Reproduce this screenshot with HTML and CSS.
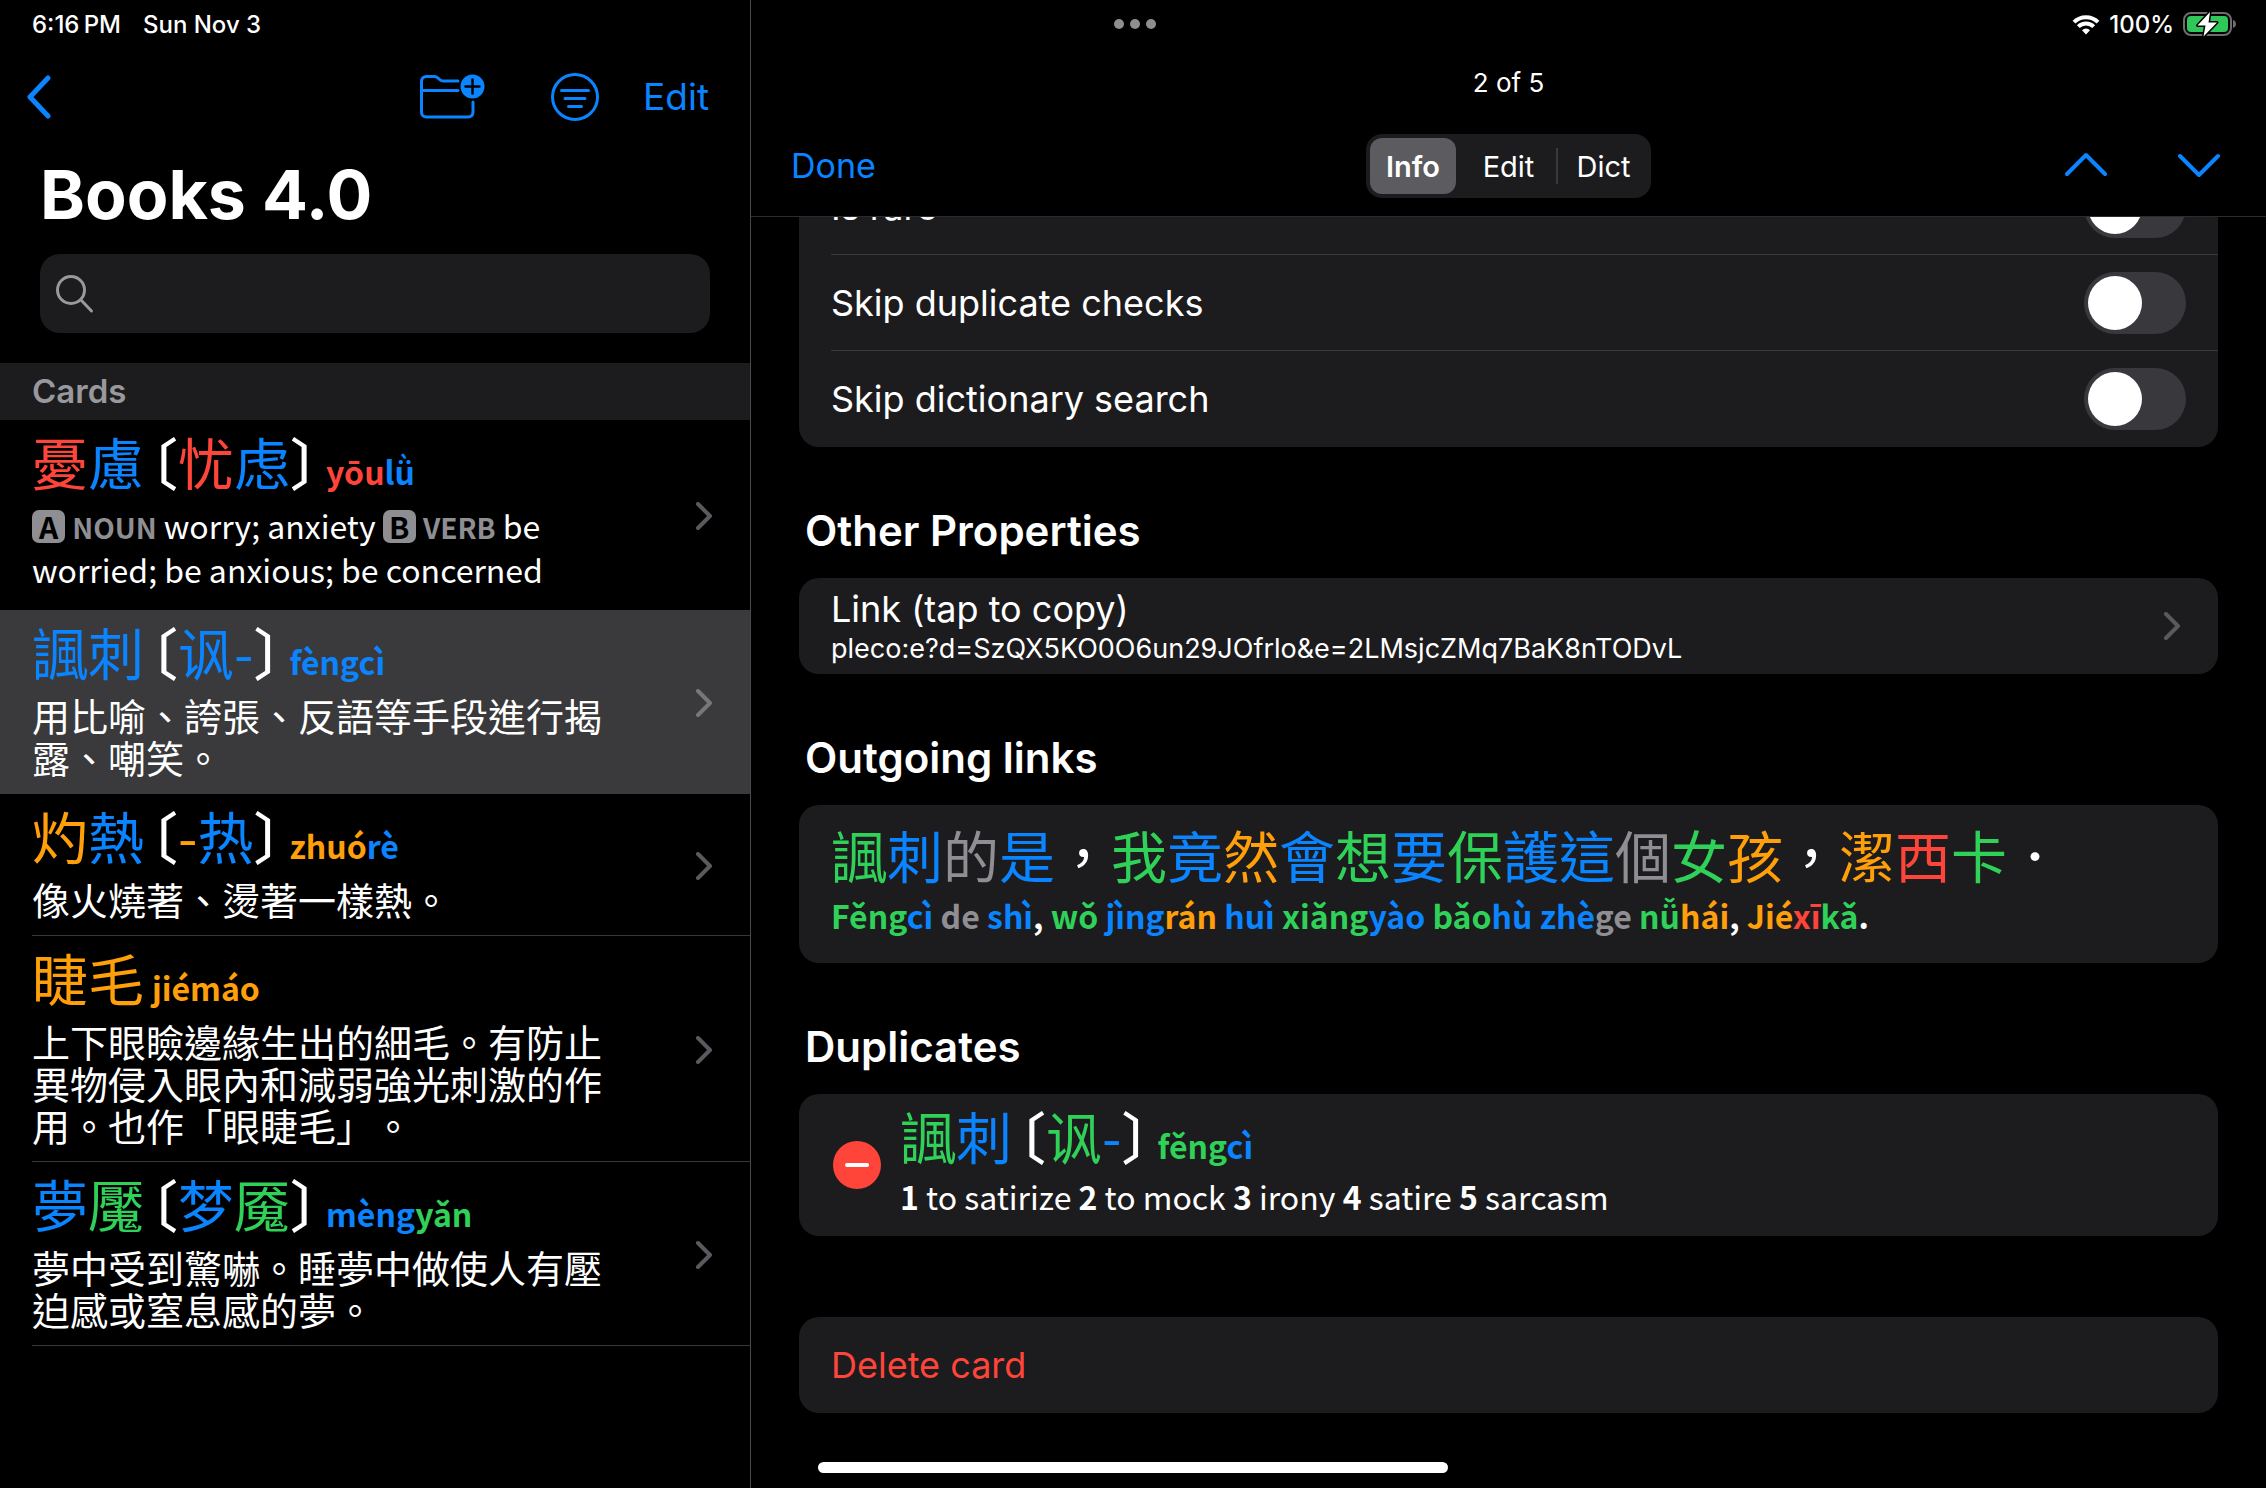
FILE: index.html
```
<!DOCTYPE html>
<html lang="zh-Hant">
<head>
    <meta charset="UTF-8">
    <meta name="viewport" content="width=device-width, initial-scale=1.0">
    <title>Books 4.0</title>
    <link rel="stylesheet" href="styles.css">
</head>
<body>
    <div class="status-bar">
        <div class="status-left"><span>6:16&#8239;PM</span><span>Sun Nov 3</span></div>
        <div class="dots"><i></i><i></i><i></i></div>
        <div class="status-right">
            <svg class="wifi" viewBox="0 0 28 21">
                <path d="M2 8.2a17 17 0 0 1 24 0" />
                <path d="M6.3 12.6a11 11 0 0 1 15.4 0" />
                <path class="wifi-dot" d="M14 20.5l-4-4.2a5.6 5.6 0 0 1 8 0z" />
            </svg>
            <span>100%</span>
            <svg class="battery" viewBox="0 0 54 26">
                <rect x="1" y="2" width="47" height="22" rx="7" fill="none" stroke="#6d6d70" stroke-width="2" />
                <path d="M50 9v8c2-.6 3-2.200 3-4s-1-3.400-3-4z" fill="#6d6d70" />
                <rect x="4" y="5" width="41" height="16" rx="4" fill="#30c759" />
                <path d="M27 1L14.500 14.500h8L20.500 25.500 34 11.500h-8.500z" fill="#fff" stroke="#000" stroke-width="3" paint-order="stroke" stroke-linejoin="round" />
            </svg>
        </div>
    </div>

    <div class="split">
        <aside class="sidebar">
            <nav class="sidebar-nav">
                <button class="icon-btn" aria-label="Back">
                    <svg width="26" height="44" viewBox="0 0 26 44"><path d="M22 3L4 22l18 19" stroke-width="5" /></svg>
                </button>
                <button class="icon-btn push" aria-label="New folder">
                    <svg width="66" height="46" viewBox="0 0 66 46">
                        <path d="M38 7H23c-2 0-3-1-4-2l-1-1c-1-1-2-1.500-4-1.500H6.500c-3 0-5 2-5 5V38c0 3 2 5 5 5H48c3 0 5-2 5-5V28" stroke-width="3" />
                        <path d="M1.500 16.500H38" stroke-width="3" />
                        <circle cx="52.500" cy="12.500" r="12" fill="#0a84ff" stroke="none" />
                        <path d="M52.500 5.500v14M45.500 12.500h14" stroke="#000" stroke-width="2.500" />
                    </svg>
                </button>
                <button class="icon-btn filter" aria-label="Sort and filter">
                    <svg width="50" height="50" viewBox="0 0 50 50">
                        <circle cx="25" cy="25" r="22.500" stroke-width="3" />
                        <path d="M11.500 18.500h27M15 26.500h20M18.500 34.500h13" stroke-width="3" />
                    </svg>
                </button>
                <button class="text-btn large">Edit</button>
            </nav>

            <h1>Books 4.0</h1>

            <label class="search">
                <svg width="40" height="40" viewBox="0 0 40 40"><circle cx="16" cy="16" r="13.500" /><path d="M26 26l10.500 11" /></svg>
                <input type="search" aria-label="Search">
            </label>

            <h2 class="list-header">Cards</h2>

            <ul class="cards">
                <li class="card-row">
                    <div class="card-body">
                        <div class="head"><span class="t1">憂</span><span class="t4">慮</span><b class="open">〔</b><span class="t1">忧</span><span class="t4">虑</span><b>〕</b><span class="pinyin"><span class="t1">yōu</span><span class="t4">lǜ</span></span></div>
                        <div class="def latin"><span class="badge">A</span> <span class="pos">NOUN</span> worry; anxiety <span class="badge">B</span> <span class="pos">VERB</span> be worried; be anxious; be concerned</div>
                    </div>
                    <svg class="chevron" viewBox="0 0 18 28"><path d="M3 2l12 12L3 26" /></svg>
                </li>
                <li class="card-row selected">
                    <div class="card-body">
                        <div class="head"><span class="t4">諷刺</span><b class="open">〔</b><span class="t4">讽-</span><b>〕</b><span class="pinyin t4">fèngcì</span></div>
                        <div class="def">用比喻、誇張、反語等手段進行揭露、嘲笑。</div>
                    </div>
                    <svg class="chevron" viewBox="0 0 18 28"><path d="M3 2l12 12L3 26" /></svg>
                </li>
                <li class="card-row">
                    <div class="card-body">
                        <div class="head"><span class="t2">灼</span><span class="t4">熱</span><b class="open">〔</b><span class="t2">-</span><span class="t4">热</span><b>〕</b><span class="pinyin"><span class="t2">zhuó</span><span class="t4">rè</span></span></div>
                        <div class="def">像火燒著、燙著一樣熱。</div>
                    </div>
                    <svg class="chevron" viewBox="0 0 18 28"><path d="M3 2l12 12L3 26" /></svg>
                </li>
                <li class="card-row">
                    <div class="card-body">
                        <div class="head"><span class="t2">睫毛</span><span class="pinyin t2">jiémáo</span></div>
                        <div class="def">上下眼瞼邊緣生出的細毛。有防止異物侵入眼內和減弱強光刺激的作用。也作「眼睫毛」。</div>
                    </div>
                    <svg class="chevron" viewBox="0 0 18 28"><path d="M3 2l12 12L3 26" /></svg>
                </li>
                <li class="card-row">
                    <div class="card-body">
                        <div class="head"><span class="t4">夢</span><span class="t3">魘</span><b class="open">〔</b><span class="t4">梦</span><span class="t3">魇</span><b>〕</b><span class="pinyin"><span class="t4">mèng</span><span class="t3">yǎn</span></span></div>
                        <div class="def">夢中受到驚嚇。睡夢中做使人有壓迫感或窒息感的夢。</div>
                    </div>
                    <svg class="chevron" viewBox="0 0 18 28"><path d="M3 2l12 12L3 26" /></svg>
                </li>
            </ul>
        </aside>

        <main class="detail">
            <header class="detail-nav">
                <div class="counter">2 of 5</div>
                <div class="toolbar">
                    <button class="text-btn">Done</button>
                    <div class="segmented">
                        <button class="active">Info</button>
                        <button>Edit</button>
                        <button>Dict</button>
                    </div>
                    <div class="arrows">
                        <button class="icon-btn" aria-label="Previous card"><svg width="42" height="26" viewBox="0 0 42 26"><path d="M2 22L21 3l19 19" stroke-width="4" /></svg></button>
                        <button class="icon-btn" aria-label="Next card"><svg width="42" height="26" viewBox="0 0 42 26"><path d="M2 4l19 19L40 4" stroke-width="4" /></svg></button>
                    </div>
                </div>
            </header>

            <div class="scroll">
                <div class="settings">
                    <section class="group">
                        <label class="row"><span>Is rare</span><input type="checkbox" class="switch"></label>
                        <label class="row"><span>Skip duplicate checks</span><input type="checkbox" class="switch"></label>
                        <label class="row"><span>Skip dictionary search</span><input type="checkbox" class="switch"></label>
                    </section>

                    <h2>Other Properties</h2>
                    <button class="group link-row">
                        <span class="link-text">
                            <span>Link (tap to copy)</span>
                            <small>pleco:e?d=SzQX5KO0O6un29JOfrlo&amp;e=2LMsjcZMq7BaK8nTODvL</small>
                        </span>
                        <svg class="chevron" viewBox="0 0 18 28"><path d="M3 2l12 12L3 26" /></svg>
                    </button>

                    <h2>Outgoing links</h2>
                    <section class="group sentence">
                        <div class="head"><span class="t3">諷</span><span class="t4">刺</span><span class="t5">的</span><span class="t4">是</span>，<span class="t3">我</span><span class="t4">竟</span><span class="t2">然</span><span class="t4">會</span><span class="t3">想</span><span class="t4">要</span><span class="t3">保</span><span class="t4">護這</span><span class="t5">個</span><span class="t3">女</span><span class="t2">孩</span>，<span class="t2">潔</span><span class="t1">西</span><span class="t3">卡</span>．</div>
                        <div class="reading"><span class="t3">Fěng</span><span class="t4">cì</span> <span class="t5">de</span> <span class="t4">shì</span>, <span class="t3">wǒ</span> <span class="t4">jìng</span><span class="t2">rán</span> <span class="t4">huì</span> <span class="t3">xiǎng</span><span class="t4">yào</span> <span class="t3">bǎo</span><span class="t4">hù</span> <span class="t4">zhè</span><span class="t5">ge</span> <span class="t3">nǚ</span><span class="t2">hái</span>, <span class="t2">Jié</span><span class="t1">xī</span><span class="t3">kǎ</span>.</div>
                    </section>

                    <h2>Duplicates</h2>
                    <section class="group duplicate">
                        <button class="remove" aria-label="Remove duplicate"><svg width="48" height="48" viewBox="0 0 48 48"><circle cx="24" cy="24" r="24" fill="#ff453a" /><path d="M14 24h20" stroke="#fff" stroke-width="4" stroke-linecap="round" /></svg></button>
                        <div class="card-body">
                            <div class="head"><span class="t3">諷</span><span class="t4">刺</span><b class="open">〔</b><span class="t3">讽</span><span class="t4">-</span><b>〕</b><span class="pinyin"><span class="t3">fěng</span><span class="t4">cì</span></span></div>
                            <div class="def latin"><strong>1</strong> to satirize <strong>2</strong> to mock <strong>3</strong> irony <strong>4</strong> satire <strong>5</strong> sarcasm</div>
                        </div>
                    </section>

                    <button class="group delete">Delete card</button>
                </div>
            </div>
        </main>
    </div>
    <div class="home-indicator"></div>
</body>
</html>
```
FILE: styles.css
```
* {
    box-sizing: border-box;
}

body {
    margin: 0;
    height: 100vh;
    overflow: hidden;
    background: #000;
    color: #fff;
    font-family: Inter, "Noto Sans CJK TC", sans-serif;
    font-size: 36px;
}

h1, h2, ul {
    margin: 0;
    padding: 0;
    list-style: none;
}

button {
    font: inherit;
    color: inherit;
    background: none;
    border: none;
    padding: 0;
    cursor: pointer;
}

svg {
    display: block;
}

/* tone colours */
.t1 { color: #ff453a; }
.t2 { color: #ff9f0a; }
.t3 { color: #30d158; }
.t4 { color: #0a84ff; }
.t5 { color: #8e8e93; }

/* status bar lies over both columns */
.status-bar {
    position: absolute;
    top: 0;
    left: 0;
    right: 0;
    height: 48px;
    padding: 0 29px 0 32px;
    display: grid;
    grid-template-columns: 1fr auto 1fr;
    align-items: center;
    font-size: 24px;
    font-weight: 500;
}

.status-left,
.status-right,
.dots {
    display: flex;
    align-items: center;
}

.status-left {
    gap: 22px;
}

.status-right {
    justify-content: flex-end;
    gap: 9px;
}

.dots {
    gap: 6px;
}

.dots i {
    width: 10px;
    height: 10px;
    border-radius: 50%;
    background: #8e8e8e;
}

.wifi {
    width: 28px;
    height: 21px;
    fill: none;
    stroke: #fff;
    stroke-width: 4;
}

.wifi-dot {
    fill: #fff;
    stroke: none;
}

.battery {
    width: 54px;
    height: 26px;
}

.split {
    display: grid;
    grid-template-columns: minmax(0, 751px) minmax(0, 1fr);
    height: 100%;
}

/* sidebar */
.sidebar {
    padding-top: 48px;
    border-right: 1px solid #48484a;
}

.sidebar-nav {
    display: flex;
    align-items: center;
    height: 98px;
    padding: 0 41px 0 26px;
}

.icon-btn svg {
    fill: none;
    stroke: #0a84ff;
    stroke-linecap: round;
    stroke-linejoin: round;
}

.push {
    margin-left: auto;
}

.filter {
    margin: 0 43px 0 64px;
}

.text-btn {
    padding-bottom: 2px;
    color: #0a84ff;
    font-size: 34px;
}

.text-btn.large {
    font-size: 37px;
}

h1 {
    padding: 0 40px;
    font-size: 68px;
    line-height: 96px;
    font-weight: 700;
}

.search {
    display: flex;
    align-items: center;
    height: 79px;
    margin: 12px 40px 30px;
    padding: 0 15px;
    gap: 12px;
    background: #1c1c1e;
    border-radius: 20px;
}

.search svg {
    fill: none;
    stroke: #98989d;
    stroke-width: 3;
    stroke-linecap: round;
}

.search input {
    flex: 1;
    min-width: 0;
    height: 100%;
    background: none;
    border: none;
    outline: none;
    color: #fff;
    font: inherit;
}

.list-header {
    height: 57px;
    padding: 0 32px;
    background: #1c1c1e;
    color: #98989d;
    font-size: 33px;
    line-height: 56px;
    font-weight: 600;
}

.card-row {
    position: relative;
    display: flex;
    align-items: center;
    justify-content: space-between;
    padding: 11px 37px 16px 32px;
}

.card-row::after {
    content: "";
    position: absolute;
    left: 32px;
    right: 0;
    bottom: 0;
    height: 1px;
    background: #38383a;
}

.card-row:first-child::after,
.card-row.selected::after {
    display: none;
}

.card-row.selected {
    background: #3a3a3c;
}

.card-body {
    max-width: 576px;
}

.head,
.def,
.reading {
    font-family: "Noto Sans CJK TC", sans-serif;
    text-spacing-trim: space-all;
}

.head {
    font-size: 56px;
    line-height: 60px;
    white-space: nowrap;
}

/* half-width brackets around the simplified form */
.head b {
    font-weight: 500;
    font-feature-settings: "halt";
}

.head .open {
    margin-left: 6px;
}

.pinyin {
    margin-left: 8px;
    font-size: 32px;
    line-height: 1;
    font-weight: 700;
}

.def {
    margin-top: 13px;
    font-size: 38px;
    line-height: 42px;
}

.def.latin {
    margin-top: 12px;
    padding-bottom: 3px;
    font-size: 32px;
    line-height: 44px;
}

.badge {
    display: inline-block;
    width: 33px;
    height: 33px;
    border-radius: 7px;
    background: #8e8e93;
    color: #000;
    font-size: 30px;
    line-height: 33px;
    font-weight: 700;
    text-align: center;
}

.pos {
    color: #8e8e93;
    font-size: 28px;
    line-height: 1;
    font-weight: 700;
}

.chevron {
    flex: none;
    width: 18px;
    height: 28px;
    fill: none;
    stroke: #5a5a5e;
    stroke-width: 4;
    stroke-linecap: round;
    stroke-linejoin: round;
}

.card-row .chevron {
    margin-top: 6px;
}

.selected .chevron {
    stroke: #77777b;
}

/* detail pane */
.detail {
    display: flex;
    flex-direction: column;
    min-height: 0;
    padding-top: 48px;
}

.detail-nav {
    flex: none;
    height: 169px;
    border-bottom: 1px solid #2c2c2e;
}

.counter {
    height: 68px;
    font-size: 26px;
    line-height: 70px;
    text-align: center;
}

.toolbar {
    display: grid;
    grid-template-columns: 1fr auto 1fr;
    align-items: center;
    height: 100px;
    padding: 0 40px;
}

.toolbar .text-btn {
    justify-self: start;
}

.segmented {
    display: flex;
    height: 64px;
    padding: 4px 0;
    border-radius: 16px;
    background: #1c1c1e;
    font-size: 29px;
}

.segmented button {
    min-width: 95px;
    border-radius: 12px;
}

.segmented button + button {
    background: linear-gradient(#3a3a3c, #3a3a3c) left center / 2px 36px no-repeat;
}

.segmented .active + button {
    background: none;
}

.segmented .active {
    min-width: 86px;
    margin: 0 5px 0 4px;
    background: #5b5b60;
    font-weight: 600;
}

.arrows {
    display: flex;
    justify-content: flex-end;
    gap: 71px;
    padding: 0 6px 2px 0;
}

.scroll {
    flex: 1;
    min-height: 0;
    overflow: hidden;
}

/* list is scrolled up under the toolbar */
.settings {
    margin: -58px 48px 75px;
}

.group {
    display: block;
    width: 100%;
    padding: 0 32px;
    background: #1c1c1e;
    border-radius: 20px;
    text-align: left;
}

.row {
    display: flex;
    align-items: center;
    justify-content: space-between;
    height: 96px;
    margin-right: -32px;
    padding-right: 32px;
    border-bottom: 1px solid #3a3a3c;
}

.row:last-child {
    border-bottom: none;
}

.switch {
    appearance: none;
    width: 102px;
    height: 62px;
    margin: 0;
    padding: 4px;
    border-radius: 31px;
    background: #39393d;
}

.switch::before {
    content: "";
    display: block;
    width: 54px;
    height: 54px;
    border-radius: 50%;
    background: #fff;
}

.switch:checked {
    background: #30d158;
}

.switch:checked::before {
    margin-left: auto;
}

.settings h2 {
    padding: 57px 6px 20px;
    font-size: 42px;
    line-height: 54px;
    font-weight: 600;
}

.link-row {
    display: flex;
    align-items: center;
    justify-content: space-between;
    min-height: 96px;
    padding-right: 37px;
}

.link-text {
    display: flex;
    flex-direction: column;
    padding-top: 2px;
}

.link-text span {
    line-height: 44px;
}

.link-text small {
    font-size: 27px;
    line-height: 36px;
}

.sentence {
    padding-top: 19px;
    padding-bottom: 21px;
}

.reading {
    margin-top: 4px;
    font-size: 32px;
    line-height: 54px;
    font-weight: 700;
}

.duplicate {
    display: flex;
    align-items: center;
    gap: 19px;
    height: 142px;
    padding-left: 34px;
}

.duplicate .card-body {
    align-self: flex-start;
    max-width: none;
    padding-top: 11px;
}

.duplicate .def {
    margin-top: 9px;
}

.delete {
    height: 96px;
    margin-top: 81px;
    color: #ff453a;
}

.home-indicator {
    position: absolute;
    left: 818px;
    bottom: 15px;
    width: 630px;
    height: 11px;
    border-radius: 6px;
    background: #fff;
}
```
